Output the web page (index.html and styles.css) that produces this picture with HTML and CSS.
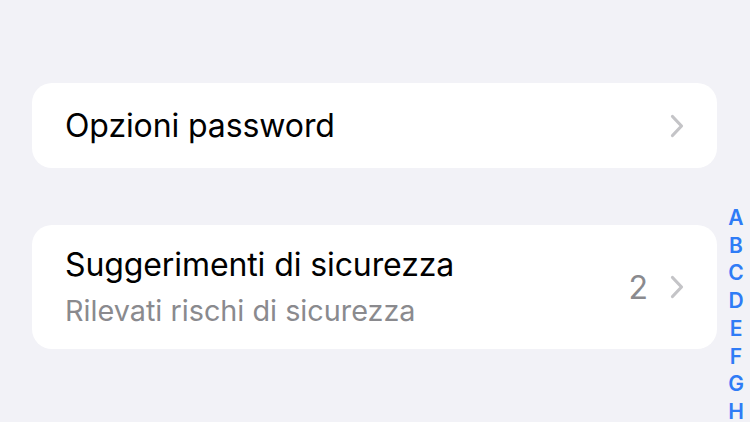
FILE: index.html
```html
<!DOCTYPE html>
<html lang="it">
<head>
  <meta charset="UTF-8" />
  <meta name="viewport" content="width=device-width, initial-scale=1" />
  <title>Password</title>
  <link rel="stylesheet" href="styles.css">
</head>
<body>
  <div class="screen">
    <main class="list">
      <!-- Opzioni password -->
      <a class="card row" href="#">
        <span class="title">Opzioni password</span>
        <svg class="chevron" width="14" height="24" viewBox="0 0 14 24" aria-hidden="true">
          <path d="M2.5 2.5 L11.5 12 L2.5 21.5" />
        </svg>
      </a>

      <!-- Suggerimenti di sicurezza -->
      <a class="card row tall" href="#">
        <span class="texts">
          <span class="title">Suggerimenti di sicurezza</span>
          <span class="subtitle">Rilevati rischi di sicurezza</span>
        </span>
        <span class="count">2</span>
        <svg class="chevron" width="14" height="24" viewBox="0 0 14 24" aria-hidden="true">
          <path d="M2.5 2.5 L11.5 12 L2.5 21.5" />
        </svg>
      </a>
    </main>

    <nav class="index" aria-label="Indice">
      <span>A</span>
      <span>B</span>
      <span>C</span>
      <span>D</span>
      <span>E</span>
      <span>F</span>
      <span>G</span>
      <span>H</span>
    </nav>
  </div>
</body>
</html>
```

FILE: styles.css
```css
html, body {
  margin: 0;
  height: 100%;
}

body {
  font-family: 'Inter', 'Roboto', 'Liberation Sans', sans-serif;
  background: #f2f2f7;
  color: #000;
  overflow: hidden;
}

.screen {
  display: flex;
  align-items: flex-start;
}

.list {
  width: 685px;
  margin: 83px 0 0 32px;
  display: flex;
  flex-direction: column;
  gap: 57px;
}

.card {
  background: #fff;
  border-radius: 20px;
  text-decoration: none;
  color: inherit;
}

.row {
  display: flex;
  align-items: center;
  height: 85px;
  padding: 0 33px;
  box-sizing: border-box;
}

.row.tall {
  height: 124px;
}

.title {
  flex: 1;
  font-size: 32px;
  letter-spacing: -0.1px;
  line-height: 38px;
}

.texts {
  flex: 1;
  display: flex;
  flex-direction: column;
}

.subtitle {
  margin-top: 10px;
  font-size: 28.8px;
  line-height: 34px;
  color: #8a8a8e;
}

.count {
  font-size: 32px;
  color: #8a8a8e;
  margin-right: 22px;
}

.chevron {
  flex: none;
  fill: none;
  stroke: #c4c4c7;
  stroke-width: 3.2;
  stroke-linecap: round;
  stroke-linejoin: round;
}

.index {
  display: flex;
  flex-direction: column;
  align-items: center;
  width: 16px;
  margin: 204px 0 0 11px;
  font-size: 21px;
  font-weight: 600;
  line-height: 27.7px;
  color: #2f7cf6;
}
```
